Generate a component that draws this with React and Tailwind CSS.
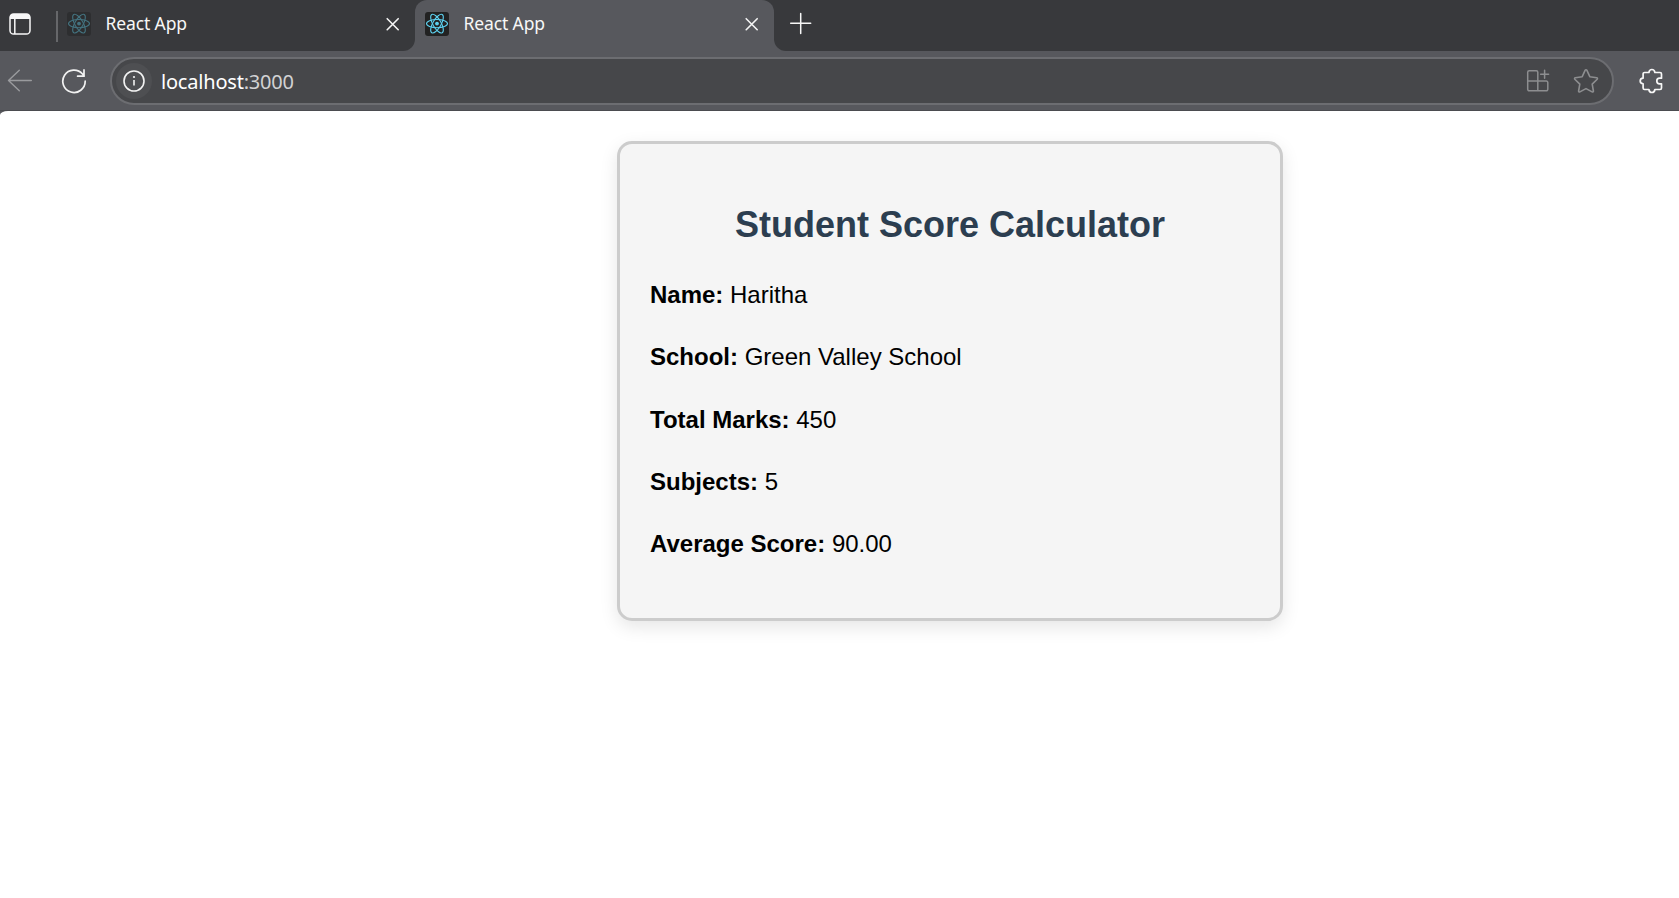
const student = [
  ["Name:", "Haritha"],
  ["School:", "Green Valley School"],
  ["Total Marks:", "450"],
  ["Subjects:", "5"],
  ["Average Score:", "90.00"],
];

function ReactLogo({ dim }) {
  return (
    <svg
      width="24"
      height="24"
      viewBox="0 0 24 24"
      className={dim ? "shrink-0 rounded-[3px] bg-[#2d2e30] text-[#43727f]" : "shrink-0 rounded-[3px] bg-[#222222] text-[#5ccfee]"}
      fill="none"
      stroke="currentColor"
      strokeWidth="1.1"
    >
      <ellipse cx="12" cy="11.6" rx="10.5" ry="4.1" />
      <ellipse cx="12" cy="11.6" rx="10.5" ry="4.1" transform="rotate(60 12 11.6)" />
      <ellipse cx="12" cy="11.6" rx="10.5" ry="4.1" transform="rotate(120 12 11.6)" />
      <circle cx="12" cy="11.6" r="1.9" fill="currentColor" stroke="none" />
    </svg>
  );
}

function CloseIcon() {
  return (
    <svg width="14" height="14" viewBox="0 0 14 14" className="shrink-0 text-[#f4f4f4]" fill="none" stroke="currentColor" strokeWidth="1.6" strokeLinecap="round">
      <path d="M1.2 1.7 12.2 12.7M12.2 1.7 1.2 12.7" />
    </svg>
  );
}

function TabTitle() {
  return (
    <span className="ml-[14.5px] flex-1 whitespace-nowrap pb-[2px] font-['Noto_Sans',sans-serif] text-[17.5px] leading-[22px] tracking-[-0.12px] text-[#f7f7f7]">
      React App
    </span>
  );
}

function TabStrip() {
  return (
    <div className="flex h-[51px] bg-[#38393c]">
      <div className="w-[415px] bg-[#57585d]">
        <div className="flex h-full items-start rounded-br-[12px] bg-[#38393c] pl-2">
          <svg width="24" height="24" viewBox="0 0 24 24" className="mt-3 shrink-0" fill="none" stroke="#f7f7f7" strokeWidth="1.5">
            <rect x="2" y="2" width="20" height="20" rx="3.6" />
            <path d="M2 6.5V5.4A3.4 3.4 0 0 1 5.4 2h13.2A3.4 3.4 0 0 1 22 5.4v1.1z" fill="#f7f7f7" stroke="none" />
            <path d="M2 6.3h20M6.8 6.3V22" />
          </svg>
          <div className="mt-[11px] ml-6 h-[31px] w-[2px] bg-[#66676a]" />
          <div className="mt-3 ml-[9px] flex flex-1 items-center pr-[15px]">
            <ReactLogo dim />
            <TabTitle />
            <CloseIcon />
          </div>
        </div>
      </div>
      <div className="flex h-full w-[359px] items-start rounded-t-[12px] bg-[#57585d] pt-3 pr-[15.5px] pl-[10px]">
        <div className="flex flex-1 items-center">
          <ReactLogo />
          <TabTitle />
          <CloseIcon />
        </div>
      </div>
      <div className="flex-1 bg-[#57585d]">
        <div className="h-full rounded-bl-[12px] bg-[#38393c] pt-3 pl-[15px]">
          <svg width="24" height="24" viewBox="0 0 24 24" fill="none" stroke="#f7f7f7" strokeWidth="1.5" strokeLinecap="round">
            <path d="M11.7 1.5v20M1.7 11.3h20" />
          </svg>
        </div>
      </div>
    </div>
  );
}

function Toolbar() {
  return (
    <div className="flex h-[60px] items-start border-b border-[#4b4c50] bg-[#57585d] pt-[6px]">
      <svg width="26" height="24" viewBox="0 0 26 24" className="mt-3 ml-[7px] shrink-0" fill="none" stroke="#9a9b9e" strokeWidth="1.4" strokeLinecap="round" strokeLinejoin="round">
        <path d="M24.3 11.5H1.5M12.3 1.3 1.5 11.5l10.8 10.2" />
      </svg>
      <svg width="26" height="26" viewBox="0 0 26 26" className="mt-[11px] ml-[28px] shrink-0" fill="none" stroke="#f2f2f2" strokeWidth="1.7" strokeLinecap="round" strokeLinejoin="round">
        <path d="M24.2 13.2A11.2 11.2 0 1 1 21.5 6l1.7 2M23 1.9v6.3h-6.4" />
      </svg>
      <div className="ml-[23px] flex h-[48px] w-[1504px] items-center rounded-full border-2 border-[#6c6d71] bg-[#46474a] pr-[13px] pl-1">
        <div className="flex h-9 w-9 items-center justify-center rounded-full bg-[#4e4f52]">
          <svg width="24" height="24" viewBox="0 0 24 24" fill="none" stroke="#f2f2f2" strokeWidth="1.6">
            <circle cx="12" cy="12" r="10" />
            <path d="M12 11v5.6" />
            <circle cx="12" cy="8" r="1.1" fill="#f2f2f2" stroke="none" />
          </svg>
        </div>
        <div className="ml-[9px] flex-1 pt-[2px] font-['Noto_Sans',sans-serif] text-[20px] leading-7 tracking-[-0.2px] text-white">
          localhost<span className="text-[#d2d2d3]">:3000</span>
        </div>
        <svg width="24" height="24" viewBox="0 0 24 24" className="shrink-0" fill="none" stroke="#8d8e90" strokeWidth="1.5" strokeLinecap="round" strokeLinejoin="round">
          <path d="M11.8 12V3.2a1.5 1.5 0 0 0-1.5-1.5H3.2a1.5 1.5 0 0 0-1.5 1.5v17.1a1.5 1.5 0 0 0 1.5 1.5h17.1a1.5 1.5 0 0 0 1.5-1.5V13.5a1.5 1.5 0 0 0-1.5-1.5H1.7M11.8 12v9.8M18.6 1.3v8M14.6 5.3h8" />
        </svg>
        <svg width="26" height="26" viewBox="0 0 26 26" className="ml-[23px] shrink-0" fill="none" stroke="#8d8e90" strokeWidth="1.6" strokeLinejoin="round">
          <path d="M12.2 2.2a.9.9 0 0 1 1.6 0l3 6.5 6.9 1a.9.9 0 0 1 .5 1.5l-5 4.9 1.2 6.9a.9.9 0 0 1-1.3.9L13 20.6l-6.1 3.3a.9.9 0 0 1-1.3-.9l1.2-6.9-5-4.9a.9.9 0 0 1 .5-1.5l6.9-1z" />
        </svg>
      </div>
      <svg width="26" height="26" viewBox="0 0 26 26" className="mt-[11px] ml-[25px] shrink-0" fill="none" stroke="#f7f7f7" strokeWidth="1.7" strokeLinejoin="round">
        <path d="M5.6 4.5h4.3c.3-2 1.4-3 3-3s2.7 1 3 3h5.1a1.5 1.5 0 0 1 1.5 1.5v4.2h-1.9a2.8 2.8 0 0 0 0 5.6h1.9V20a1.5 1.5 0 0 1-1.5 1.5h-5.1c-.3 2-1.4 3-3 3s-2.7-1-3-3H5.6A1.5 1.5 0 0 1 4.1 20v-4.2c-1.9-.2-2.9-1.3-2.9-2.8s1-2.6 2.9-2.8V6a1.5 1.5 0 0 1 1.5-1.5z" />
      </svg>
    </div>
  );
}

export default function App() {
  return (
    <div className="flex h-screen w-full flex-col overflow-hidden bg-[#57585d]">
      <TabStrip />
      <Toolbar />
      <main className="flex-1 rounded-tl-[8px_4px] bg-white pt-[30px] font-['Liberation_Sans',Arial,sans-serif] text-black">
        <section className="ml-[617px] h-[480px] w-[666px] rounded-[15px] border-[3px] border-[#cccccc] bg-[#f5f5f5] p-[30px] shadow-[0_6px_18px_rgba(0,0,0,0.1)]">
          <h2 className="my-[30px] text-center text-[36px] leading-[42px] font-bold text-[#2c3e50]">
            Student Score Calculator
          </h2>
          {student.map(([label, value]) => (
            <p key={label} className="mb-6 text-[24px] leading-[38.3px]">
              <strong className="font-bold">{label}</strong> {value}
            </p>
          ))}
        </section>
      </main>
    </div>
  );
}
